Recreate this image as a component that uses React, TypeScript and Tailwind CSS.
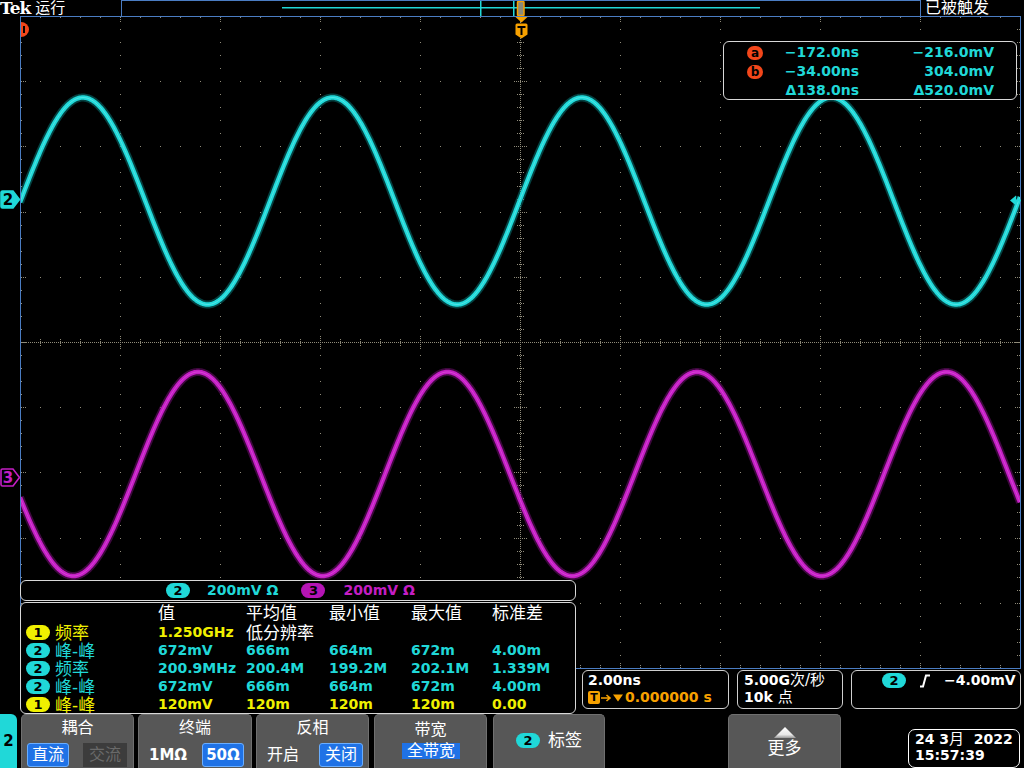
import React from "react";

const CY = "#20d8d8";
const MG = "#c41ec4";
const OR = "#f7a100";
const BL = "#4a7cc2";
const DT = "#8f8b7a";

const W = 1000;
const DY = 65.2;
const MY = 13.04;

function sine(cy: number, amp: number, x0: number) {
  let d = "";
  for (let x = 0; x <= W; x += 1) {
    const y = cy - amp * Math.sin((2 * Math.PI * (x - x0)) / 249.5);
    d += (x === 0 ? "M" : "L") + x + " " + y.toFixed(2);
  }
  return d;
}

function Graticule() {
  const dots: React.ReactElement[] = [];
  for (let i = 1; i < 10; i++) {
    if (i === 5) continue;
    for (let j = 1; j < 50; j++) {
      dots.push(<rect key={`v${i}-${j}`} x={i * 100} y={Math.round(j * MY)} width={1} height={1} />);
    }
  }
  for (let j = 1; j < 10; j++) {
    if (j === 5) continue;
    for (let k = 1; k < 50; k++) {
      if (k % 5 === 0) continue;
      dots.push(<rect key={`h${j}-${k}`} x={k * 20} y={Math.round(j * DY)} width={1} height={1} />);
    }
  }

  const ticks: React.ReactElement[] = [];
  for (let k = 1; k < 50; k++) {
    const x = k * 20 + 0.5;
    const big = k % 5 === 0;
    ticks.push(<line key={`t${k}`} x1={x} x2={x} y1={1} y2={big ? 7 : 3} />);
    ticks.push(<line key={`b${k}`} x1={x} x2={x} y1={652} y2={big ? 646 : 649} />);
    ticks.push(<line key={`c${k}`} x1={x} x2={x} y1={big ? 320 : 323} y2={big ? 333 : 330} />);
  }
  for (let j = 1; j < 50; j++) {
    const y = Math.round(j * MY) + 0.5;
    const big = j % 5 === 0;
    ticks.push(<line key={`l${j}`} y1={y} y2={y} x1={1} x2={big ? 7 : 3} />);
    ticks.push(<line key={`r${j}`} y1={y} y2={y} x1={1000} x2={big ? 994 : 997} />);
    ticks.push(<line key={`m${j}`} y1={y} y2={y} x1={big ? 494 : 497} x2={big ? 507 : 504} />);
  }

  const cyan = sine(185, 103.5, 0.5);
  const mag = sine(458, 102, 115.6);

  return (
    <svg width="1001" height="653" viewBox="0 0 1001 653" className="block">
      <defs>
        <clipPath id="gclip">
          <rect x="1" y="1" width="999" height="651" />
        </clipPath>
      </defs>
      <g fill={DT}>{dots}</g>
      <g stroke={DT} strokeWidth="1" strokeDasharray="1 1">
        {ticks}
        <line x1="0" x2="1000" y1="326.5" y2="326.5" />
        <line x1="500.5" x2="500.5" y1="0" y2="652" />
      </g>
      <g clipPath="url(#gclip)" fill="none" strokeLinejoin="round">
        <path d={cyan} stroke="#0c8f8f" strokeWidth="8" opacity="0.45" />
        <path d={cyan} stroke={CY} strokeWidth="4.5" />
        <path d={cyan} stroke="#7ff2f2" strokeWidth="1" opacity="0.5" />
        <path d={mag} stroke="#7a107a" strokeWidth="8" opacity="0.5" />
        <path d={mag} stroke={MG} strokeWidth="4.5" />
        <path d={mag} stroke="#e870e8" strokeWidth="1" opacity="0.45" />
      </g>
      <rect x="0.5" y="0.5" width="1000" height="652" fill="none" stroke={BL} strokeWidth="1" />
      {/* cursor a, off screen left */}
      <path d="M1 6 A8 7.5 0 0 1 1 21 Z" fill="#f2461a" />
      <rect x="3" y="10" width="2" height="7" fill="#000" />
      {/* trigger position */}
      <polygon points="495.5,1 507.5,1 501.5,6.5" fill={OR} />
      <path d="M497 7.5 H506 Q507.5 7.5 507.5 9 V18.5 L501.5 22.5 L495.5 18.5 V9 Q495.5 7.5 497 7.5 Z" fill={OR} />
      <rect x="497.5" y="10" width="8" height="2" fill="#000" />
      <rect x="500.5" y="10" width="2" height="9" fill="#000" />
      {/* trigger level */}
      <polygon points="990,184.5 996,179.5 996,189.5" fill={CY} />
      <rect x="995" y="183.5" width="6" height="2" fill={CY} />
    </svg>
  );
}

function ChMarker({ n, filled, color }: { n: string; filled: boolean; color: string }) {
  return (
    <svg width="21" height="19" viewBox="0 0 21 19" className="block">
      <path
        d="M2.5 1 H13 L19.5 9.5 L13 18 H2.5 Q1 18 1 16.5 V2.5 Q1 1 2.5 1 Z"
        fill={filled ? color : "#000"}
        stroke={color}
        strokeWidth="1.6"
      />
      <text
        x="8"
        y="15"
        textAnchor="middle"
        fontFamily="DejaVu Sans, sans-serif"
        fontWeight="700"
        fontSize="15"
        fill={filled ? "#000" : color}
      >
        {n}
      </text>
    </svg>
  );
}

function Pill({ n, className }: { n: string; className: string }) {
  return (
    <span
      className={`inline-flex shrink-0 items-center justify-center w-[24px] h-[15px] rounded-full text-black font-bold text-[13px] leading-none ${className}`}
    >
      {n}
    </span>
  );
}

function TopBar() {
  return (
    <div className="h-4 flex shrink-0">
      <div className="w-[121px] flex items-center">
        <span className="font-['DejaVu_Serif',serif] font-bold text-[17px] leading-[16px] tracking-[-1px] text-white">
          Tek
        </span>
        <span className="ml-[5px] text-[15px] leading-[16px] text-white">运行</span>
      </div>
      <div className="w-[800px] h-4 border-t border-x border-[#4a7cc2]">
        <svg width="798" height="15" viewBox="0 0 798 15" className="block">
          <rect x="160" y="6" width="478" height="1.5" fill={CY} />
          <rect x="358" y="0" width="1.5" height="15" fill={CY} />
          <rect x="391" y="0" width="1.5" height="15" fill={CY} />
          <rect x="395.5" y="0.5" width="6.5" height="14" rx="1" fill="#8a8a7a" stroke={OR} strokeWidth="1.5" />
        </svg>
      </div>
      <div className="ml-[4px] text-white text-[16px] leading-[16px]">已被触发</div>
    </div>
  );
}

function CursorBox() {
  const rows = [
    ["a", "−172.0ns", "−216.0mV"],
    ["b", "−34.00ns", "304.0mV"],
    ["", "Δ138.0ns", "Δ520.0mV"],
  ];
  return (
    <div className="absolute left-[723px] top-[41px] w-[294px] h-[59px] border border-[#d8d8d8] rounded-[6px] bg-black pt-[1px]">
      {rows.map((r, i) => (
        <div key={i} className="h-[19px] flex items-center text-[14px] font-bold text-[#20d8d8]">
          <span className="ml-[23px] w-[16px] h-[14px] flex items-center justify-center">
            {r[0] && (
              <span className="w-[16px] h-[14px] rounded-full bg-[#f2461a] text-black text-[12px] leading-none flex items-center justify-center">
                {r[0]}
              </span>
            )}
          </span>
          <span className="w-[96px] text-right">{r[1]}</span>
          <span className="w-[135px] text-right">{r[2]}</span>
        </div>
      ))}
    </div>
  );
}

type Row = { ch: string; y: boolean; label: string; vals: string[]; extra?: string };

const ROWS: Row[] = [
  { ch: "1", y: true, label: "频率", vals: ["1.250GHz"], extra: "低分辨率" },
  { ch: "2", y: false, label: "峰-峰", vals: ["672mV", "666m", "664m", "672m", "4.00m"] },
  { ch: "2", y: false, label: "频率", vals: ["200.9MHz", "200.4M", "199.2M", "202.1M", "1.339M"] },
  { ch: "2", y: false, label: "峰-峰", vals: ["672mV", "666m", "664m", "672m", "4.00m"] },
  { ch: "1", y: true, label: "峰-峰", vals: ["120mV", "120m", "120m", "120m", "0.00"] },
];

function MeasPanel() {
  const grid = "grid grid-cols-[29px_103px_88px_83px_82px_81px_1fr] items-center h-[18px]";
  return (
    <div className="absolute left-[20px] top-[580px] w-[556px]">
      <div className="h-[21px] border border-[#d8d8d8] rounded-[6px] bg-black flex items-center pl-[145px] text-[14px] font-bold">
        <Pill n="2" className="bg-[#20d8d8]" />
        <span className="ml-[17px] text-[#20d8d8]">200mV Ω</span>
        <Pill n="3" className="ml-[23px] bg-[#b414b4]" />
        <span className="ml-[18px] text-[#c41ec4]">200mV Ω</span>
      </div>
      <div className="mt-[1px] h-[112px] border border-[#d8d8d8] rounded-[6px] bg-black pl-[5px] pt-[1px]">
        <div className={`${grid} text-white text-[17px] leading-[18px]`}>
          <span />
          <span />
          <span>值</span>
          <span>平均值</span>
          <span>最小值</span>
          <span>最大值</span>
          <span>标准差</span>
        </div>
        {ROWS.map((r, i) => (
          <div key={i} className={`${grid} ${r.y ? "text-[#f0f000]" : "text-[#20d8d8]"}`}>
            <Pill n={r.ch} className={r.y ? "bg-[#f0f000]" : "bg-[#20d8d8]"} />
            <span className="text-[17px] leading-[18px]">{r.label}</span>
            {r.vals.map((v, j) => (
              <span key={j} className="text-[14px] font-bold whitespace-nowrap">
                {v}
              </span>
            ))}
            {r.extra && <span className="text-[17px] leading-[18px] text-white col-span-2 whitespace-nowrap">{r.extra}</span>}
          </div>
        ))}
      </div>
    </div>
  );
}

function ReadoutRow() {
  const box = "h-[39px] border border-[#cfcfcf] rounded-[6px] bg-black pt-[1px] text-[14px] leading-[17px]";
  return (
    <div className="h-[45px] flex justify-end pr-[3px] pt-[1px] gap-2 shrink-0">
      <div className={`${box} w-[147px] pl-[5px]`}>
        <div className="font-bold text-white">2.00ns</div>
        <div className="flex items-center font-bold text-[#f7a100]">
          <span className="w-[12px] h-[13px] rounded-[2px] bg-[#f7a100] text-black text-[11px] leading-none flex items-center justify-center">
            T
          </span>
          <svg width="11" height="8" viewBox="0 0 11 8" className="ml-[1px]">
            <path d="M0 4 H8 M5.5 1 L9 4 L5.5 7" stroke={OR} strokeWidth="1.6" fill="none" />
          </svg>
          <svg width="11" height="8" viewBox="0 0 11 8" className="ml-[1px]">
            <polygon points="0,0.5 10,0.5 5,7.5" fill={OR} />
          </svg>
          <span className="ml-[1px]">0.000000 s</span>
        </div>
      </div>
      <div className={`${box} w-[106px] pl-[6px] text-white`}>
        <div>
          <span className="font-bold">5.00G</span>
          <span className="text-[15px]">次/秒</span>
        </div>
        <div>
          <span className="font-bold">10k </span>
          <span className="text-[15px]">点</span>
        </div>
      </div>
      <div className={`${box} w-[170px] pl-[30px]`}>
        <div className="flex items-center h-[17px]">
          <Pill n="2" className="bg-[#20d8d8]" />
          <svg width="10" height="14" viewBox="0 0 10 14" className="ml-[14px]">
            <path d="M0 12.5 H3 L6 1.5 H10" stroke="#fff" strokeWidth="2" fill="none" />
          </svg>
          <span className="ml-[14px] font-bold text-white">−4.00mV</span>
        </div>
      </div>
    </div>
  );
}

function Btn({ className, children }: { className: string; children: React.ReactNode }) {
  return (
    <div
      className={`h-[54px] bg-[#575757] border border-b-0 border-[#707070] rounded-t-[5px] text-white overflow-hidden ${className}`}
    >
      {children}
    </div>
  );
}

const sel = "h-[24px] border border-[#6aaeff] bg-[#1f72e6] rounded-[3px] flex items-center justify-center text-white";

function MenuRow() {
  return (
    <div className="h-[54px] flex shrink-0">
      <div className="w-[17px] bg-[#20d8d8] rounded-tr-[6px] flex items-center justify-center text-black font-bold text-[15px]">
        2
      </div>
      <Btn className="ml-[4px] w-[113px]">
        <div className="h-[28px] pt-[3px] leading-[20px] text-center text-[16px]">耦合</div>
        <div className="flex pl-[5px]">
          <div className={`${sel} w-[42px] text-[16px]`}>直流</div>
          <div className="ml-[14px] w-[44px] h-[24px] bg-[#3c3c3c] flex items-center justify-center text-[16px] text-[#6a6a6a]">
            交流
          </div>
        </div>
      </Btn>
      <Btn className="ml-[4px] w-[114px]">
        <div className="h-[28px] pt-[3px] leading-[20px] text-center text-[16px]">终端</div>
        <div className="flex items-center pl-[10px]">
          <span className="w-[53px] font-bold text-[15px]">1MΩ</span>
          <div className={`${sel} w-[42px] font-bold text-[15px]`}>50Ω</div>
        </div>
      </Btn>
      <Btn className="ml-[4px] w-[113px]">
        <div className="h-[28px] pt-[3px] leading-[20px] text-center text-[16px]">反相</div>
        <div className="flex items-center pl-[10px]">
          <span className="w-[52px] text-[16px]">开启</span>
          <div className={`${sel} w-[44px] text-[16px]`}>关闭</div>
        </div>
      </Btn>
      <Btn className="ml-[5px] w-[113px]">
        <div className="h-[28px] pt-[5px] leading-[20px] text-center text-[16px]">带宽</div>
        <div className="pl-[27px]">
          <div className="w-[58px] h-[16px] bg-[#1f72e6] text-[16px] leading-[16px] text-center">全带宽</div>
        </div>
      </Btn>
      <Btn className="ml-[6px] w-[112px]">
        <div className="h-full flex items-center pl-[22px] pb-[2px]">
          <Pill n="2" className="bg-[#20d8d8]" />
          <span className="ml-[8px] text-[17px]">标签</span>
        </div>
      </Btn>
      <Btn className="ml-[123px] w-[113px]">
        <div className="flex flex-col items-center pt-[12px]">
          <svg width="22" height="11" viewBox="0 0 22 11">
            <defs>
              <linearGradient id="tri" x1="0" y1="0" x2="0" y2="1">
                <stop offset="0" stopColor="#ffffff" />
                <stop offset="0.7" stopColor="#e8e8e8" />
                <stop offset="1" stopColor="#9a9a9a" />
              </linearGradient>
            </defs>
            <polygon points="11,0 22,11 0,11" fill="url(#tri)" />
          </svg>
          <span className="mt-[1px] text-[17px] leading-[18px]">更多</span>
        </div>
      </Btn>
      <div className="ml-[67px] mt-[15px] w-[112px] h-[39px] border border-white rounded-[7px] pl-[6px] pt-[1px] text-white font-bold text-[14px] leading-[16px]">
        <div className="flex whitespace-pre">
          <span>24 3</span>
          <span className="font-normal text-[15px]">月</span>
          <span>  2022</span>
        </div>
        <div>15:57:39</div>
      </div>
    </div>
  );
}

export default function App() {
  return (
    <div className="relative w-[1024px] h-[768px] bg-black overflow-hidden flex flex-col font-['DejaVu_Sans','Noto_Sans_CJK_SC',sans-serif]">
      <TopBar />
      <div className="h-[653px] flex shrink-0">
        <div className="w-[20px]" />
        <Graticule />
      </div>
      <ReadoutRow />
      <MenuRow />

      <div className="absolute left-0 top-[190px]">
        <ChMarker n="2" filled color={CY} />
      </div>
      <div className="absolute left-0 top-[468px]">
        <ChMarker n="3" filled={false} color={MG} />
      </div>
      <CursorBox />
      <MeasPanel />
    </div>
  );
}
